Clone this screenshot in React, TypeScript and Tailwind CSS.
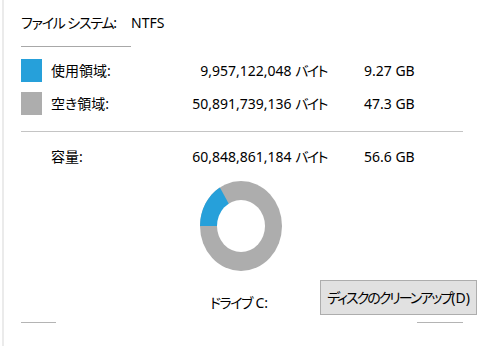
import React from 'react';

// Donut showing used vs free space (used = 16.4%)
const UsageDonut = () => (
  <svg width="82" height="90" viewBox="0 0 82 90">
    <ellipse cx="41" cy="45" rx="41" ry="45" fill="#adadad" />
    <path d="M41,45 L0,45 A41,45 0 0 1 19.88,6.43 Z" fill="#26a0da" />
    <ellipse cx="41" cy="45" rx="24" ry="26" fill="#ffffff" />
  </svg>
);

interface RowProps {
  swatch?: string;
  label: string;
  bytes: string;
  size: string;
}

const SpaceRow: React.FC<RowProps> = ({ swatch, label, bytes, size }) => (
  <div className="flex items-center h-[23px]">
    {swatch ? (
      <div className={`w-[21px] h-[23px] shrink-0 ${swatch}`}></div>
    ) : (
      <div className="w-[21px] shrink-0"></div>
    )}
    <div className="flex w-[276px] ml-[9px] leading-[18px] whitespace-nowrap">
      <span className="flex-1">{label}</span>
      <span>
        {bytes} <span className="tracking-[-1.5px]">バイト</span>
      </span>
    </div>
    <span className="ml-[37px] leading-[18px]">{size}</span>
  </div>
);

export default function App() {
  return (
    <div className="w-[480px] h-[346px] bg-white pl-[2px] overflow-hidden text-[14px] text-black font-['Noto_Sans','Noto_Sans_CJK_JP',sans-serif] [font-feature-settings:'palt']">
      <div className="h-full border-l-2 border-[#ebebeb] pl-[17px] flex flex-col">
        <div className="flex pt-[14px] leading-[18px] whitespace-nowrap">
          <span className="w-[110px] tracking-[-1.2px]">ファイル システム:</span>
          <span>NTFS</span>
        </div>
        <div className="mt-[14px] h-px w-[110px] bg-[#a8a8a8]"></div>

        <div className="mt-[12px]">
          <SpaceRow swatch="bg-[#26a0da]" label="使用領域:" bytes="9,957,122,048" size="9.27 GB" />
        </div>
        <div className="mt-[10px]">
          <SpaceRow swatch="bg-[#adadad]" label="空き領域:" bytes="50,891,739,136" size="47.3 GB" />
        </div>

        <div className="mt-[16px] h-px w-[442px] bg-[#c4c4c4]"></div>

        <div className="mt-[13px]">
          <SpaceRow label="容量:" bytes="60,848,861,184" size="56.6 GB" />
        </div>

        <div className="mt-[13px] ml-[179px]">
          <UsageDonut />
        </div>

        <div className="mt-[9px] flex w-[456px] items-start">
          <span className="ml-[189px] mt-[14px] leading-[18px] whitespace-nowrap">
            <span className="tracking-[-1.5px]">ドライブ</span> C:
          </span>
          <button className="ml-auto h-[35px] w-[157px] bg-[#e1e1e1] border border-[#adadad] leading-[18px] whitespace-nowrap px-0">
            <span className="tracking-[-2px]">ディスクのクリーンアップ</span>(D)
          </button>
        </div>

        <div className="mt-[7px] flex justify-between w-[442px]">
          <div className="h-px w-[35px] bg-[#b4b4b4]"></div>
          <div className="h-px w-[46px] bg-[#b4b4b4]"></div>
        </div>
      </div>
    </div>
  );
}
